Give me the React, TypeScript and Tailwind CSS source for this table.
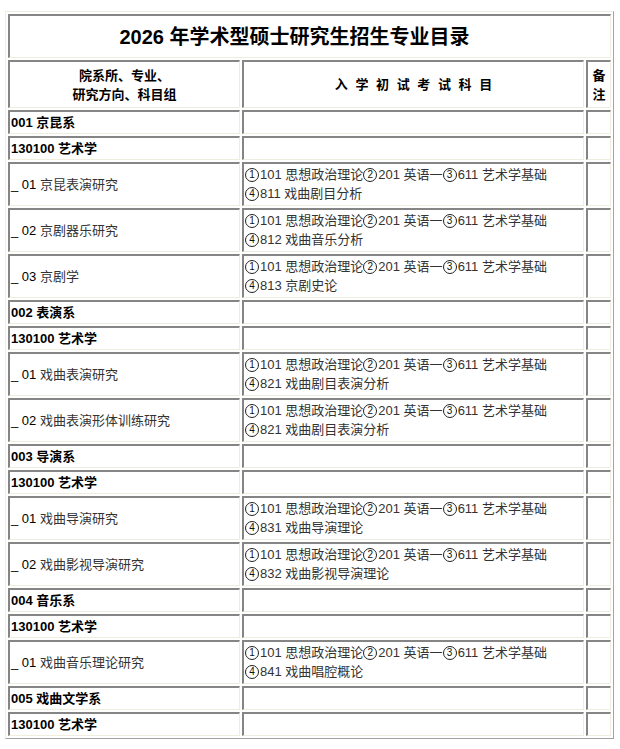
import React from "react";

type Row =
  | { kind: "b"; text: string }
  | { kind: "d"; num: string; name: string; l2: string };

const rows: Row[] = [
  { kind: "b", text: "001 京昆系" },
  { kind: "b", text: "130100 艺术学" },
  { kind: "d", num: "01", name: "京昆表演研究", l2: "④811 戏曲剧目分析" },
  { kind: "d", num: "02", name: "京剧器乐研究", l2: "④812 戏曲音乐分析" },
  { kind: "d", num: "03", name: "京剧学", l2: "④813 京剧史论" },
  { kind: "b", text: "002 表演系" },
  { kind: "b", text: "130100 艺术学" },
  { kind: "d", num: "01", name: "戏曲表演研究", l2: "④821 戏曲剧目表演分析" },
  { kind: "d", num: "02", name: "戏曲表演形体训练研究", l2: "④821 戏曲剧目表演分析" },
  { kind: "b", text: "003 导演系" },
  { kind: "b", text: "130100 艺术学" },
  { kind: "d", num: "01", name: "戏曲导演研究", l2: "④831 戏曲导演理论" },
  { kind: "d", num: "02", name: "戏曲影视导演研究", l2: "④832 戏曲影视导演理论" },
  { kind: "b", text: "004 音乐系" },
  { kind: "b", text: "130100 艺术学" },
  { kind: "d", num: "01", name: "戏曲音乐理论研究", l2: "④841 戏曲唱腔概论" },
  { kind: "b", text: "005 戏曲文学系" },
  { kind: "b", text: "130100 艺术学" },
];

const cell =
  "border-t-2 border-l-2 border-r border-b border-t-[#858585] border-l-[#858585] border-r-[#eeedde] border-b-[#eeedde] p-[1px] align-middle";

const LINE1 = "①101 思想政治理论②201 英语一③611 艺术学基础";
const CIRCLED: Record<string, string> = { "①": "1", "②": "2", "③": "3", "④": "4" };

function Rich({ text }: { text: string }) {
  const parts = text.split(/([①②③④])/);
  return (
    <>
      {parts.map((p, i) =>
        CIRCLED[p] ? (
          <span
            key={i}
            className="inline-flex items-center justify-center w-[14px] h-[14px] rounded-full border border-[#222] text-[10px] leading-none text-[#111] align-[1px] mr-[1px]"
          >
            {CIRCLED[p]}
          </span>
        ) : (
          <span key={i}>{p}</span>
        )
      )}
    </>
  );
}

export default function App() {
  return (
    <div className="bg-white w-[620px] h-[749px] pt-[11px] pl-[5px] font-['Liberation_Sans','Noto_Sans_CJK_SC',sans-serif] text-[13px] text-black">
      <table className="table-fixed border-separate border-spacing-[2px] border border-t-[#efeee2] border-l-[#efeee2] border-r-[#a3a3a3] border-b-[#a3a3a3] w-[609px]">
        <colgroup>
          <col className="w-[232px]" />
          <col className="w-[342px]" />
          <col className="w-[25px]" />
        </colgroup>
        <tbody>
          <tr>
            <td colSpan={3} className={`${cell} h-[44px] text-center text-[20px] font-bold leading-[24px] pr-[32px]`}>
              2026 年学术型硕士研究生招生专业目录
            </td>
          </tr>
          <tr>
            <td className={`${cell} h-[48px] text-center font-bold leading-[19px]`}>
              院系所、专业、
              <br />
              研究方向、科目组
            </td>
            <td className={`${cell} h-[48px] text-center font-bold text-[13px] [word-spacing:4px]`}>
              入 学 初 试 考 试 科 目
            </td>
            <td className={`${cell} h-[48px] text-center font-bold leading-[19px]`}>
              备
              <br />注
            </td>
          </tr>
          {rows.map((r, i) =>
            r.kind === "b" ? (
              <tr key={i}>
                <td className={`${cell} h-[24px] font-bold leading-[18px] whitespace-nowrap`}>{r.text}</td>
                <td className={`${cell} h-[24px]`}></td>
                <td className={`${cell} h-[24px]`}></td>
              </tr>
            ) : (
              <tr key={i}>
                <td className={`${cell} h-[44px] leading-[18px] whitespace-nowrap text-[#333]`}>
                  <span className="text-black">_ {r.num}</span> {r.name}
                </td>
                <td className={`${cell} h-[44px] leading-[19px] whitespace-nowrap text-[#333]`}>
                  <div className="h-[19px] -mt-[2px]">
                    <Rich text={LINE1} />
                  </div>
                  <div className="h-[19px]">
                    <Rich text={r.l2} />
                  </div>
                </td>
                <td className={`${cell} h-[44px]`}></td>
              </tr>
            )
          )}
        </tbody>
      </table>
    </div>
  );
}
